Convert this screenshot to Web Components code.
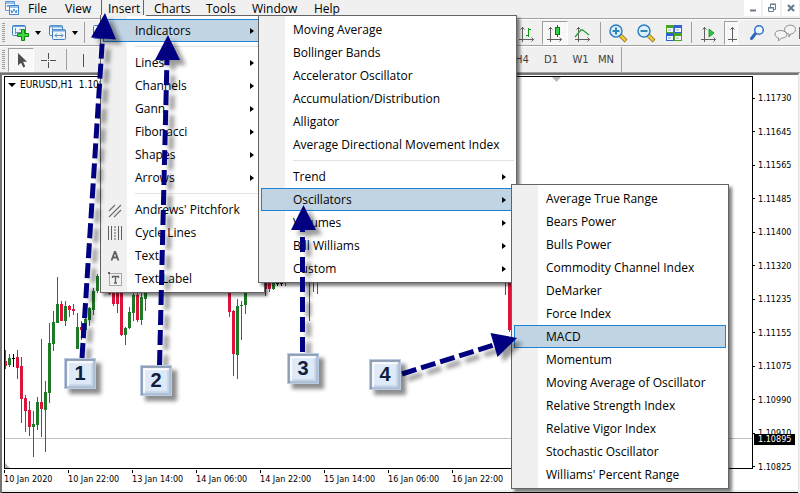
<!DOCTYPE html>
<html lang="en">
<head>
<meta charset="utf-8">
<title>EURUSD,H1</title>
<style>
html, body { margin: 0; height: 100%; }
body { font: 12px/16px "Open Sans", "Noto Sans", sans-serif; color: #000; background: #f0f0f0; overflow: hidden; }
</style>
</head>
<body>
<mt-terminal></mt-terminal>
<script>
const define = (name, html, setup) => {
  const t = document.createElement('template');
  t.innerHTML = html;
  customElements.define(name, class extends HTMLElement {
    constructor() {
      super();
      this.attachShadow({ mode: 'open' }).append(t.content.cloneNode(true));
    }
    connectedCallback() { if (setup) setup(this, this.shadowRoot); }
  });
};

/* ---- icons ---- */
const axes = '<path d="M5.5 4v15M2 16.5h15M3.500 6.500l2-2 2 2M14.500 14.500l2 2-2 2" fill="none" stroke="#606060"/>';
const ICONS = {
  logo: [16, 16, '<path d="M1.500 1.500h9v9h-9z" fill="#fff" stroke="#5b9bd8"/><path d="M2 3h8M3 7l1-2 2 3 2-3" fill="none" stroke="#3c82cc"/><path d="M5.500 5.500h9v9h-9z" fill="#fff" stroke="#3c82cc"/><path d="M6 7h8M7 10l1 3 2-4 2 4 1-3" fill="none" stroke="#3c82cc"/>'],
  newchart: [20, 18, '<rect x="1.500" y="1.500" width="13" height="10" rx="1" fill="#eef5fc" stroke="#3a7fbd"/><path d="M2 2.500h12" stroke="#69a5dc"/><path d="M4.500 4v6M4 8.500h7M8 6l2-1" fill="none" stroke="#6f93b5"/><path d="M10.500 5.500h3v4h4v3h-4v4h-3v-4h-4v-3h4z" fill="#3fdc3f" stroke="#0b860b"/>'],
  profiles: [20, 18, '<rect x="1.500" y="1.500" width="13" height="10" rx="1" fill="#eef5fc" stroke="#3a7fbd"/><path d="M2 2.500h12" stroke="#69a5dc" stroke-width="2"/><path d="M4.500 4v6M4 8.500h7" fill="none" stroke="#5f86ac"/><rect x="4.500" y="5.500" width="13" height="10" rx="1" fill="#eef5fc" stroke="#3a7fbd"/><path d="M5 6.500h12" stroke="#69a5dc" stroke-width="2"/><path d="M7 11.500h8M7 11.500l2-2M7 11.500l2 2M15 11.500l-2-2M15 11.500l-2 2" fill="none" stroke="#5f86ac"/>'],
  market: [20, 18, '<rect x="1.500" y="1.500" width="15" height="13" rx="1" fill="#eef5fc" stroke="#3a7fbd"/>'],
  cursor: [20, 20, '<path d="M7 3v12.500l3-2.800 2.300 4.800 2-1-2.200-4.700H16z" fill="#505050"/>'],
  cross: [20, 20, '<path d="M9.500 3v6M9.500 12v6M2 10.500h6M11 10.500h6M9 10.500h1" stroke="#505050"/>'],
  vline: [20, 20, '<path d="M9.500 4v13" stroke="#505050"/>'],
  bars: [20, 20, axes + '<path d="M11.500 5v9M12 6.500h2M9 12.500h2" stroke="#119911"/>'],
  candles: [20, 20, axes + '<path d="M12.500 2v12" stroke="#0a7a0a"/><rect x="10.500" y="4.500" width="4" height="7" fill="#2fd04a" stroke="#0a7a0a"/>'],
  line: [20, 20, axes + '<path d="M2 14l5-6q2-2 4 0l5 4" fill="none" stroke="#2da23a" stroke-width="1.300"/>'],
  zin: [20, 20, '<path d="M12 12l6 6" stroke="#8d7012" stroke-width="4"/><path d="M12.500 12.500l5 5" stroke="#f2c93a" stroke-width="2.500"/><circle cx="8" cy="8" r="6" fill="#d9effb" stroke="#2d7fc1" stroke-width="1.500"/><path d="M4.500 8h7M8 4.500v7" stroke="#3187b5" stroke-width="2"/>'],
  zout: [20, 20, '<path d="M12 12l6 6" stroke="#8d7012" stroke-width="4"/><path d="M12.500 12.500l5 5" stroke="#f2c93a" stroke-width="2.500"/><circle cx="8" cy="8" r="6" fill="#d9effb" stroke="#2d7fc1" stroke-width="1.500"/><path d="M4.500 8h7" stroke="#3187b5" stroke-width="2"/>'],
  tile: [20, 20, '<path d="M2 2h8v8H2z" fill="#46a51c"/><path d="M10 2h8v8h-8z" fill="#2e62d0"/><path d="M2 10h8v8H2z" fill="#2e62d0"/><path d="M10 10h8v8h-8z" fill="#46a51c"/><path d="M3 5h6v4H3zM11 5h6v4h-6zM3 13h6v4H3zM11 13h6v4h-6z" fill="#f3f7fc"/><path d="M4 7h3M12 7h3M4 15h3M12 15h3" stroke="#9cb4cc"/>'],
  scroll: [20, 20, axes + '<path d="M10 6l5 4-5 4z" fill="#2ec43e" stroke="#118a1d" stroke-width=".8"/>'],
  shift: [12, 20, '<path d="M7.500 4v15M3 16.500h9M5.500 6.500l2-2 2 2" fill="none" stroke="#606060"/>'],
  search: [20, 20, '<path d="M8.500 10.500l-4 5" stroke="#2b66c0" stroke-width="3" stroke-linecap="round"/><circle cx="12" cy="7" r="4.300" fill="#eef6ff" stroke="#2f72cd" stroke-width="1.500"/>'],
  chat: [24, 20, '<path d="M14 3c4-2 9 0 8.500 3.500S19 11 17.500 11l-1.500 3v-3c-5-1-6-6-2-8z" fill="#f4f4f4" stroke="#8c8c8c"/><path d="M7.500 7.500c-7 0-7 6-2 7.500v3l3-3c5 0 7-3 4-6q-2-1.500-5-1.500z" fill="#f4f4f4" stroke="#8c8c8c"/>'],
  edge: [1, 20, '<path d="M0 4h1v12H0z" fill="#2e74c8"/>'],
  min: [16, 16, '<path d="M5 10.500h6" stroke="#6c7a8e" stroke-width="2"/>'],
  restore: [16, 16, '<path d="M6.500 7V4.500h5v5H10M4.500 7.500h5v4h-5zM6 4h6M4 8h6" fill="none" stroke="#6c7a8e"/>'],
  close: [16, 16, '<path d="M5 5l6 6M11 5l-6 6" stroke="#6c7a8e" stroke-width="2.200"/>'],
  pitchfork: [16, 16, '<path d="M2 9l6-6M2 15L14 3M7 15l7-7" stroke="#707070" stroke-width="1.200" fill="none"/>'],
  cycle: [16, 16, '<path d="M1.500 1v14M4.500 1v14M11.500 1v14M14.500 1v14" stroke="#606060"/><path d="M8 1v14" stroke="#606060" stroke-dasharray="2 1"/>'],
  text: [16, 16, '<path d="M4.500 12.500L7.700 4h.6l3.200 8.500M5.500 9.500h5" stroke="#606060" stroke-width="1.800" fill="none"/>'],
  label: [16, 16, '<rect x="2.500" y="2.500" width="12" height="12" fill="none" stroke="#606060" stroke-dasharray="1 1"/><path d="M1 1h2v2H1z" fill="#606060"/><path d="M5 5.500h7M8.500 5v7M7 12h3M5.500 5v2M11.500 5v2" stroke="#606060" stroke-width="1.300" fill="none"/>']
};

define('mt-icon', `<style>:host{display:inline-flex;flex:none}svg{display:block}</style>`, (el, root) => {
  const [w, h, body] = ICONS[el.getAttribute('name')];
  root.innerHTML += `<svg width="${w}" height="${h}" viewBox="0 0 ${w} ${h}" aria-hidden="true">${body}</svg>`;
});

/* ---- menus ---- */
define('mt-menu', `<style>
:host{position:absolute;z-index:2;box-sizing:border-box;border:1px solid #646464;padding:2px;
 background:linear-gradient(90deg,#f0f0f0 26px,#fff 26px);box-shadow:3px 3px 3px rgba(0,0,0,.5)}
:host([attached]){padding-top:3px}
:host([attached])::before{content:"";position:absolute;top:-1px;left:0;width:45px;height:1px;background:#f0f0f0}
</style><div role="menu"><slot></slot></div>`);

define('mt-item', `<style>
:host{display:block}
button{all:unset;box-sizing:border-box;display:flex;align-items:center;width:100%;height:23px;border:1px solid transparent;cursor:default}
.ico{width:20px;margin-left:1px;display:flex;align-items:center;justify-content:center}
.t{flex:1;padding-left:10px;white-space:nowrap}
.arr{display:none;width:0;border:3px solid transparent;border-left:4px solid #000;border-right:0;margin-right:7px}
:host([sub]) .arr{display:block}
:host([active]) button{background:#c0d4e4;border-color:#1883d7}
</style><button role="menuitem"><span class="ico"><slot name="icon"></slot></span><span class="t"><slot></slot></span><span class="arr"></span></button>`);

define('mt-separator', `<style>:host{display:flex;align-items:center;height:9px;padding-left:32px}
i{flex:1;height:1px;background:#e2e2e2}</style><i></i>`);

/* ---- menu bar ---- */
define('mt-menubar', `<style>
:host{display:flex;align-items:flex-start;height:18px;padding:0 1px 0 4px;background:#f0f0f0;border-bottom:1px solid #a0a0a0}
nav{display:grid;grid-template-columns:36px 42px 45px 51px 45px 61px auto;gap:1px;margin-left:1px}
button{all:unset;cursor:default}
nav button{box-sizing:border-box;padding:0 6px;height:16px;line-height:15px;border:1px solid transparent;border-width:0 1px}
nav .open{border-color:#646464;width:43px}
.win{display:flex;gap:2px;margin-left:auto}
.win button{width:17px;height:16px;background:#fff;display:flex;justify-content:center}
</style>
<mt-icon name="logo"></mt-icon>
<nav><button>File</button><button>View</button><button class="open">Insert</button><button>Charts</button><button>Tools</button><button>Window</button><button>Help</button></nav>
<div class="win"><button aria-label="Minimize"><mt-icon name="min"></mt-icon></button><button aria-label="Restore"><mt-icon name="restore"></mt-icon></button><button aria-label="Close"><mt-icon name="close"></mt-icon></button></div>`);

/* ---- tool bars ---- */
define('mt-tool', `<style>
:host{display:flex;flex:none}
button{all:unset;display:flex;align-items:center;justify-content:center;width:28px;height:24px;cursor:default}
:host([on]) button{box-sizing:border-box;width:26px;margin:0 1px;border:1px solid;border-color:#a0a0a0 #fff #fff #a0a0a0;background:#f8f8f8}
:host([cut]) button{width:14px}
:host([drop]) button::after{content:"";border:3px solid transparent;border-top:4px solid #000;border-bottom:0;margin-left:4px}
:host([drop]) button{width:37px}
</style><button><slot></slot></button>`);

define('mt-toolbar', `<style>
:host{display:flex;align-items:center;box-sizing:border-box;height:27px;border-bottom:1px solid #a0a0a0;border-top:1px solid #fff;background:#f0f0f0;color:#404040}
.grip{width:3px;height:20px;margin:0 2px;background:repeating-linear-gradient(#a0a0a0 0 1px,transparent 1px 2px)}
</style><span class="grip"></span><slot></slot>`);

define('mt-rule', `<style>:host{display:block;flex:none;width:1px;height:21px;margin:0 3px;background:#a0a0a0}</style>`);

define('mt-frames', `<style>
:host{display:grid;box-sizing:border-box;grid-template-columns:30px 28px 31px 20px;align-items:center;height:25px;padding-right:5px;border-right:1px solid #a0a0a0;font:10px/14px "DejaVu Sans","Liberation Sans",sans-serif}
button{all:unset;text-align:center;cursor:default}
</style><button>H4</button><button>D1</button><button>W1</button><button>MN</button>`);

/* ---- chart ---- */
const R = '#dc143c', G = '#1f7a27', K = '#000';
/* x, high, low, body top, body bottom, colour */
const CANDLES = [
 [5,350,369,361,366,R],[9,354,367,358,365,G],[13,354,367,358,359,K],[17,350,379,357,368,R],[21,357,423,366,399,R],
 [25,395,432,398,411,R],[29,401,436,410,427,R],[33,411,457,424,427,G],[37,397,430,402,425,G],[41,339,437,402,409,R],
 [45,381,452,392,410,G],[49,323,403,343,393,G],[53,311,351,322,344,G],[57,277,323,304,323,G],[61,301,321,304,321,R],
 [65,301,326,306,321,G],[69,305,317,306,310,R],[73,304,315,309,311,R],[77,313,349,327,349,G],[81,321,340,327,330,R],
 [85,315,332,319,330,G],[89,307,326,308,320,G],[93,288,315,291,310,G],[97,274,293,276,291,G],
 [109,280,295,280,294,R],[113,280,306,280,304,R],[117,280,313,280,304,R],[121,280,336,280,335,R],[125,327,345,328,335,G],
 [129,307,329,312,328,G],[133,293,321,295,313,G],[137,290,322,295,320,R],[141,293,325,297,320,G],[145,280,311,285,299,G],
 [229,280,317,285,312,R],[233,310,376,311,354,R],[237,299,379,306,355,G],[241,301,340,305,306,G],[245,280,314,285,305,G],
 [265,275,296,275,289,R],[269,275,292,275,289,R],[273,275,290,275,289,G],[277,275,286,283,284,K],[281,275,286,283,284,K],
 [285,275,286,280,281,R],[309,275,321,280,281,G],[313,275,292,280,281,R],[317,275,294,280,281,G],
 [505,275,295,280,281,R],[509,275,332,275,330,R]];

define('mt-chart', `<style>
:host{display:flex;flex-direction:column;flex:1;box-sizing:border-box;margin-right:1px;border:2px solid #747474;border-width:2px 1px 0 2px;border-right-color:#e3e3e3;background:#fff;font:9px/12px "DejaVu Sans Condensed","DejaVu Sans",sans-serif;padding:1px 0 0 2px}
.grid{flex:1;display:grid;grid-template-columns:1fr 45px;grid-template-rows:1fr 20px}
.plot{position:relative;border:1px solid #000;overflow:hidden}
svg{display:block;position:absolute;inset:0;width:100%;height:100%}
h1{position:relative;margin:1px 0 0 3px;font:10px/14px "DejaVu Sans Condensed",sans-serif;white-space:pre;display:flex;align-items:center;gap:4px}
h1::before{content:"";border:4px solid transparent;border-top:4px solid #000;border-bottom:0}
.prices{grid-column:2;grid-row:1;display:flex;flex-direction:column;justify-content:space-between;margin:16px 0 -4px;position:relative}
.prices span{display:flex;align-items:center;gap:3px;white-space:nowrap}
.prices span::before{content:"";width:2px;height:1px;background:#000}
.now{position:absolute;right:3px;bottom:28px;left:1px;padding-left:4px;background:#000;color:#fff;line-height:11px}
.dates{grid-column:1;grid-row:2;display:grid;grid-template-columns:repeat(auto-fill,64px);overflow:hidden}
.dates span{white-space:nowrap;line-height:14px;padding-top:1px}
.dates span::before{content:"";display:block;width:1px;height:3px;margin-bottom:-1px;background:#000}
.foot{height:2px;background:#f0f0f0;border-bottom:1px solid #000;margin-left:-2px;margin-top:1px}
</style>
<div class="grid"><div class="plot"><svg aria-hidden="true"></svg><h1>EURUSD,H1  1.10895</h1></div>
<div class="prices"></div><div class="dates"></div></div><div class="foot"></div>`, (el, root) => {
  const ox = 5, oy = 77;
  root.querySelector('svg').innerHTML =
    '<path d="M0 361.500H2000" stroke="#c0c0c0"/><path d="M0 386v5h5zM547 0h9l-4.500 5z" fill="#b8b8b8"/>' +
    CANDLES.map(([x, h, l, t, b, c]) =>
      `<path d="M${x - ox} ${h - oy}h1V${l - oy}h-1zM${x - ox - 1} ${t - oy}h3V${b - oy}h-3z" fill="${c}"/>`).join('');
  root.querySelector('.prices').innerHTML =
    ['1.11730','1.11645','1.11565','1.11485','1.11400','1.11320','1.11235','1.11155','1.11075','1.10990','1.10910','1.10825']
      .map(p => `<span>${p}</span>`).join('') + '<div class="now">1.10895</div>';
  root.querySelector('.dates').innerHTML =
    ['10 Jan 2020','10 Jan 22:00','13 Jan 14:00','14 Jan 06:00','14 Jan 22:00','15 Jan 14:00','16 Jan 06:00','16 Jan 22:00']
      .map(p => `<span>${p}</span>`).join('');
});

/* ---- numbered call-outs ---- */
define('mt-callout', `<style>
:host{position:absolute;z-index:4;box-sizing:border-box;width:32px;height:31px;border:1px solid #b9cce4;background:#deeaf8;
 box-shadow:5px 5px 4px rgba(0,0,0,.45), inset 2px 2px 1px #8d9db4, inset -2px -2px 1px #aebfd4, inset 4px 4px 1px #fff, inset -4px -4px 1px #c8d8ea;
 font:bold 20px/28px "Liberation Sans",sans-serif;color:#10203c;text-align:center}
</style><slot></slot>`);

define('mt-arrows', `<style>:host{position:absolute;inset:0;z-index:3;pointer-events:none}svg{display:block;width:100%;height:100%}
svg{filter:drop-shadow(6px 5px 2px rgba(0,0,0,.4))}</style>
<svg aria-hidden="true"><g fill="none" stroke="#000080" stroke-width="5" stroke-dasharray="15 5">
<path d="M82 358L102.500 38"/><path d="M159.500 365L167 59"/><path d="M302.500 352V228"/><path d="M402 374L494 345"/></g>
<g fill="#000080"><path d="M105 13L91 37.500L116 39.500z"/><path d="M168 35L155 60H180z"/><path d="M303.500 205L291 230H316z"/><path d="M517 338L490.500 333L497.500 357z"/></g></svg>`);

/* ---- whole window ---- */
const items = (list) => list.map(i => {
  if (i === '-') return '<mt-separator></mt-separator>';
  const [label, attrs = '', icon] = i.split('|');
  return `<mt-item ${attrs}>${icon ? `<mt-icon slot="icon" name="${icon}"></mt-icon>` : ''}${label}</mt-item>`;
}).join('');

define('mt-terminal', `<style>
:host{position:relative;display:flex;flex-direction:column;min-height:100vh;overflow:hidden}
.push{margin-left:auto}
.m1{left:100px;top:15px;width:165px}
.m2{left:258px;top:15px;width:259px}
.m3{left:511px;top:184px;width:218px}
.rest{width:178px}
.find{margin-left:4px}
</style>
<mt-menubar></mt-menubar>
<mt-toolbar>
 <mt-tool drop><mt-icon name="newchart"></mt-icon></mt-tool><mt-tool drop><mt-icon name="profiles"></mt-icon></mt-tool><mt-rule></mt-rule>
 <mt-tool><mt-icon name="market"></mt-icon></mt-tool>
 <mt-tool class="push"><mt-icon name="bars"></mt-icon></mt-tool><mt-tool on><mt-icon name="candles"></mt-icon></mt-tool><mt-tool><mt-icon name="line"></mt-icon></mt-tool>
 <mt-rule></mt-rule>
 <mt-tool><mt-icon name="zin"></mt-icon></mt-tool><mt-tool><mt-icon name="zout"></mt-icon></mt-tool><mt-tool><mt-icon name="tile"></mt-icon></mt-tool>
 <mt-rule></mt-rule>
 <mt-tool><mt-icon name="scroll"></mt-icon></mt-tool><mt-tool on cut><mt-icon name="shift"></mt-icon></mt-tool>
 <mt-tool class="find"><mt-icon name="search"></mt-icon></mt-tool><mt-tool><mt-icon name="chat"></mt-icon></mt-tool><mt-icon name="edge"></mt-icon>
</mt-toolbar>
<mt-toolbar>
 <mt-tool on><mt-icon name="cursor"></mt-icon></mt-tool><mt-tool><mt-icon name="cross"></mt-icon></mt-tool>
 <mt-rule></mt-rule><mt-tool><mt-icon name="vline"></mt-icon></mt-tool>
 <mt-frames class="push"></mt-frames><span class="rest"></span>
</mt-toolbar>
<mt-chart></mt-chart>
<mt-menu class="m1" attached>${items(['Indicators|sub active','-','Lines|sub','Channels|sub','Gann|sub','Fibonacci|sub','Shapes|sub','Arrows|sub','-',"Andrews' Pitchfork||pitchfork",'Cycle Lines||cycle','Text||text','Text Label||label'])}</mt-menu>
<mt-menu class="m2">${items(['Moving Average','Bollinger Bands','Accelerator Oscillator','Accumulation/Distribution','Alligator','Average Directional Movement Index','-','Trend|sub','Oscillators|sub active','Volumes|sub','Bill Williams|sub','Custom|sub'])}</mt-menu>
<mt-menu class="m3">${items(['Average True Range','Bears Power','Bulls Power','Commodity Channel Index','DeMarker','Force Index','MACD|active','Momentum','Moving Average of Oscillator','Relative Strength Index','Relative Vigor Index','Stochastic Oscillator',"Williams' Percent Range"])}</mt-menu>
<mt-arrows></mt-arrows>
<mt-callout style="left:64px;top:358px">1</mt-callout>
<mt-callout style="left:140px;top:365px">2</mt-callout>
<mt-callout style="left:287px;top:353px">3</mt-callout>
<mt-callout style="left:369px;top:359px">4</mt-callout>`);
</script>
</body>
</html>
